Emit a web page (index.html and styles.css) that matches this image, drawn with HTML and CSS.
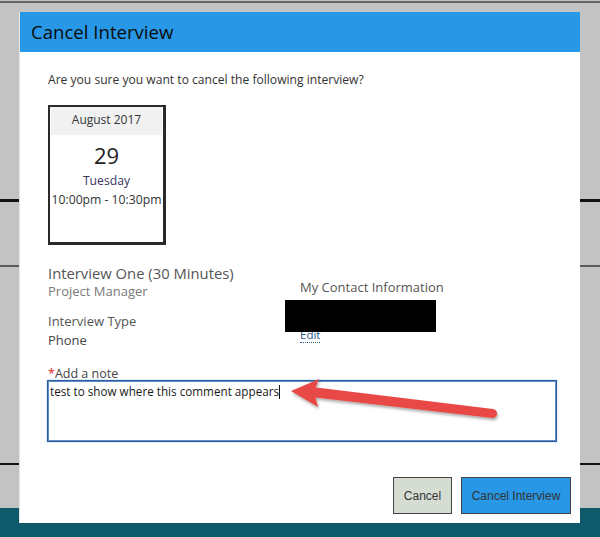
FILE: index.html
```html
<!DOCTYPE html>
<html lang="en">
<head>
<meta charset="utf-8">
<title>Cancel Interview</title>
<link rel="stylesheet" href="styles.css">
</head>
<body>
<div class="modal">
  <div class="modal-header"><h1 class="modal-title">Cancel Interview</h1></div>
  <div class="modal-body">
    <p class="question">Are you sure you want to cancel the following interview?</p>
    <div class="cal-card">
      <div class="cal-month">August 2017</div>
      <div class="cal-day">29</div>
      <div class="cal-weekday">Tuesday</div>
      <div class="cal-time">10:00pm - 10:30pm</div>
    </div>
    <div class="info-row">
      <div class="info-left">
        <div class="interview-name">Interview One (30 Minutes)</div>
        <div class="interview-role">Project Manager</div>
        <div class="info-label">Interview Type</div>
        <div class="info-value">Phone</div>
      </div>
      <div class="info-right">
        <div class="contact-title">My Contact Information</div>
        <div class="contact-details">
          <div class="contact-line">&nbsp;</div>
          <a class="edit-link" href="#">Edit</a>
          <div class="redaction"></div>
        </div>
      </div>
    </div>
    <div class="note-label"><span class="req">*</span>Add a note</div>
    <div class="note-box">test to show where this comment appears<span class="caret"></span></div>
    <div class="actions">
      <button class="btn btn-cancel" type="button">Cancel</button>
      <button class="btn btn-primary" type="button">Cancel Interview</button>
    </div>
  </div>
</div>
<svg class="annotation" width="600" height="537" viewBox="0 0 600 537" aria-hidden="true">
  <defs>
    <filter id="sh" x="-20%" y="-50%" width="140%" height="200%">
      <feDropShadow dx="1" dy="2" stdDeviation="1.6" flood-color="#000" flood-opacity="0.35"/>
    </filter>
  </defs>
  <g filter="url(#sh)" fill="#e84a47">
    <path d="M312 387 L493 409 A4.5 4.5 0 0 1 492 418 L311 397 Z"/>
    <path d="M291 391 L319 379 L314 392 L318 407 Z"/>
  </g>
</svg>
</body>
</html>
```
FILE: styles.css
```css
html, body {
  margin: 0;
  padding: 0;
}
body {
  width: 600px;
  height: 537px;
  overflow: hidden;
  position: relative;
  padding-top: 12px;
  box-sizing: border-box;
  font-family: "Open Sans", "Liberation Sans", sans-serif;
  background-color: #c3c3c3;
  background-image:
    linear-gradient(#0e5a6b, #0e5a6b),
    linear-gradient(#111, #111),
    linear-gradient(#5a5a5a, #5a5a5a),
    linear-gradient(#111, #111),
    linear-gradient(#666, #666);
  background-repeat: no-repeat;
  background-size: 100% 29px, 100% 2px, 100% 2px, 100% 3px, 100% 2px;
  background-position: 0 508px, 0 463px, 0 265px, 0 199px, 0 1px;
}
.modal {
  margin-left: 19px;
  width: 561px;
  height: 511px;
  background: #fff;
  box-sizing: border-box;
  border-left: 1px solid #e4e4e4;
}
.modal-header {
  height: 40px;
  background: #2897e6;
  display: flex;
  align-items: center;
  padding-left: 11px;
}
.modal-title {
  margin: 0;
  font-size: 18.6px;
  font-weight: 400;
  color: #0a0a0a;
  line-height: 24px;
}
.modal-body {
  padding: 20px 9px 9px 28px;
}
.question {
  margin: 0;
  font-size: 12.1px;
  line-height: 16px;
  color: #333;
}
.cal-card {
  margin-top: 17px;
  width: 118px;
  height: 140px;
  box-sizing: border-box;
  border: 2px solid #2a2a2a;
  border-right-width: 3px;
  border-bottom-width: 3px;
  text-align: center;
  color: #333;
}
.cal-month {
  background: #f1f1f1;
  height: 28px;
  line-height: 26px;
  font-size: 12px;
  margin: 0 1px;
}
.cal-day {
  margin-top: 6px;
  font-size: 22px;
  line-height: 28px;
  color: #222;
}
.cal-weekday {
  margin-top: 3px;
  font-size: 12.2px;
  line-height: 18px;
  color: #3b3560;
}
.cal-time {
  font-size: 12.2px;
  line-height: 20px;
  color: #333;
}
.info-row {
  display: flex;
  margin-top: 18px;
}
.info-left {
  width: 252px;
}
.interview-name {
  font-size: 14.8px;
  line-height: 20px;
  color: #555;
}
.interview-role {
  font-size: 13px;
  line-height: 16px;
  color: #7a7a7a;
}
.info-label {
  margin-top: 13px;
  font-size: 13px;
  line-height: 19px;
  color: #555;
}
.info-value {
  font-size: 13px;
  line-height: 19px;
  color: #444;
}
.info-right {
  padding-top: 15px;
}
.contact-title {
  font-size: 13px;
  line-height: 18px;
  color: #555;
}
.contact-details {
  position: relative;
  padding-top: 4px;
}
.contact-line {
  height: 22px;
}
.edit-link {
  display: inline-block;
  font-size: 11.5px;
  line-height: 14px;
  color: #2b5686;
  text-decoration: none;
  border-bottom: 1px dotted #2b5686;
}
.redaction {
  position: absolute;
  left: -15px;
  top: 4px;
  width: 151px;
  height: 32px;
  background: #000;
}
.note-label {
  margin-top: 16px;
  font-size: 12.5px;
  line-height: 16px;
  color: #444;
}
.req {
  color: #d9312b;
}
.note-box {
  margin-top: -2px;
  margin-left: -1px;
  width: 510px;
  height: 62px;
  box-sizing: border-box;
  border: 1px solid #2d5d9d;
  box-shadow: inset 0 0 0 1px #5f8cc6, 0 0 2px #a9c4e6;
  padding: 2px 3px 2px 2px;
  font-size: 11.7px;
  line-height: 17px;
  color: #1a1a1a;
}
.caret {
  display: inline-block;
  width: 1px;
  height: 14px;
  background: #111;
  vertical-align: -3px;
}
.actions {
  margin-top: 35px;
  display: flex;
  justify-content: flex-end;
  gap: 9px;
}
.btn {
  height: 37px;
  font-family: "Liberation Sans", Arial, sans-serif;
  font-size: 12px;
  color: #333;
  border: 1px solid #444;
  padding: 0;
  cursor: pointer;
}
.btn-cancel {
  width: 59px;
  background: #d5ddd3;
}
.btn-primary {
  width: 110px;
  background: #2897e6;
}
.annotation {
  position: absolute;
  left: 0;
  top: 0;
  pointer-events: none;
}
```
